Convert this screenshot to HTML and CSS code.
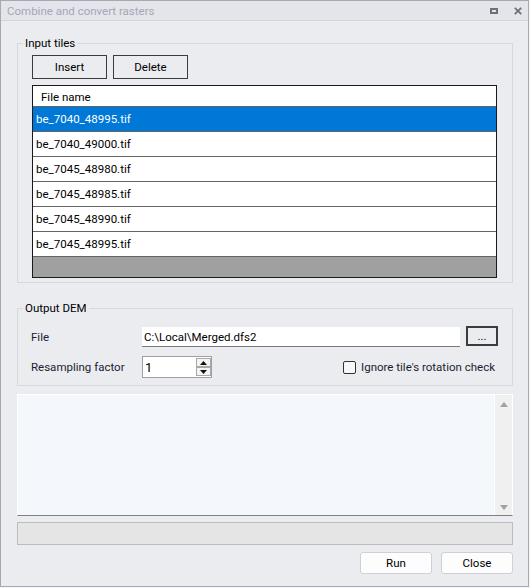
FILE: index.html
```html
<!DOCTYPE html>
<html lang="en">
<head>
    <meta charset="UTF-8">
    <title>Combine and convert rasters</title>
    <link rel="stylesheet" href="styles.css">
</head>
<body>
    <div class="window">
        <div class="titlebar">
            <span class="title">Combine and convert rasters</span>
            <span class="title-buttons">
                <span class="btn-max"></span>
                <svg class="btn-close" width="8" height="8" viewBox="0 0 8 8">
                    <path d="M0.8 0.8 L7.2 7.2 M7.2 0.8 L0.8 7.2" stroke="#6e6f7b" stroke-width="1.8" fill="none"/>
                </svg>
            </span>
        </div>

        <div class="content">
            <fieldset class="group">
                <legend>Input tiles</legend>
                <div class="tiles-body">
                    <div class="toolbar">
                        <button class="btn">Insert</button>
                        <button class="btn">Delete</button>
                    </div>
                    <div class="grid">
                        <div class="grid-head">File name</div>
                        <div class="grid-row selected">be_7040_48995.tif</div>
                        <div class="grid-row">be_7040_49000.tif</div>
                        <div class="grid-row">be_7045_48980.tif</div>
                        <div class="grid-row">be_7045_48985.tif</div>
                        <div class="grid-row">be_7045_48990.tif</div>
                        <div class="grid-row">be_7045_48995.tif</div>
                        <div class="grid-empty"></div>
                    </div>
                </div>
            </fieldset>

            <fieldset class="group output">
                <legend>Output DEM</legend>
                <div class="output-body">
                    <div class="field-row">
                        <span class="field-label">File</span>
                        <div class="textbox">C:\Local\Merged.dfs2</div>
                        <button class="btn browse">...</button>
                    </div>
                    <div class="field-row second">
                        <span class="field-label">Resampling factor</span>
                        <div class="spinbox">
                            <span class="spin-value">1</span>
                            <div class="spin-buttons">
                                <span class="spin-btn">
                                    <svg width="7" height="4" viewBox="0 0 7 4"><path d="M0 4 L3.5 0 L7 4 Z" fill="#111"/></svg>
                                </span>
                                <span class="spin-btn">
                                    <svg width="7" height="4" viewBox="0 0 7 4"><path d="M0 0 L3.5 4 L7 0 Z" fill="#111"/></svg>
                                </span>
                            </div>
                        </div>
                        <label class="check"><span class="checkbox"></span>Ignore tile's rotation check</label>
                    </div>
                </div>
            </fieldset>

            <div class="log">
                <div class="log-text"></div>
                <div class="scrollbar">
                    <svg width="8" height="5" viewBox="0 0 8 5"><path d="M0 5 L4 0 L8 5 Z" fill="#a2a2a6"/></svg>
                    <svg width="8" height="5" viewBox="0 0 8 5"><path d="M0 0 L4 5 L8 0 Z" fill="#a2a2a6"/></svg>
                </div>
            </div>

            <div class="progress"></div>

            <div class="actions">
                <button class="action">Run</button>
                <button class="action">Close</button>
            </div>
        </div>
    </div>
</body>
</html>
```

FILE: styles.css
```css
* {
    box-sizing: border-box;
}
body {
    margin: 0;
    background-color: #f6f6f8;
    font-family: Roboto, "Noto Sans", sans-serif;
    font-size: 11.5px;
    color: #000;
}
.window {
    width: 529px;
    height: 587px;
    border: 1px solid #a6a8b3;
    background-color: #ebecf0;
    display: flex;
    flex-direction: column;
}
.titlebar {
    height: 20px;
    border-bottom: 1px solid #d3d4da;
    background-color: #e4e5ea;
    display: flex;
    align-items: center;
    padding: 1px 6px 0 6px;
}
.title {
    flex: 1;
    color: #a3a7b8;
    font-size: 11.5px;
}
.title-buttons {
    display: flex;
    align-items: center;
    gap: 16px;
}
.btn-max {
    width: 8px;
    height: 6px;
    border: 2px solid #6e6f7b;
}
.btn-close {
    display: block;
}
.content {
    padding: 15px 15px 0 16px;
    display: flex;
    flex-direction: column;
}

/* group boxes */
.group {
    margin: 0;
    padding: 0;
    min-width: 0;
    border: 1px solid #d7d8dd;
}
.group legend {
    margin-left: 5px;
    padding: 0 2px;
    line-height: 14px;
}
.output {
    margin-top: 18px;
}
.tiles-body {
    padding: 5px 15px 4px 14px;
}
.toolbar {
    display: flex;
    gap: 6px;
}
.btn {
    width: 75px;
    height: 24px;
    padding: 0;
    border: 1px solid #3c3c3c;
    background-color: #ebecf0;
    font: inherit;
    color: #000;
}

/* file list */
.grid {
    margin-top: 6px;
    border: 1px solid #1a1a1a;
    background-color: #a0a0a0;
}
.grid-head {
    height: 21px;
    line-height: 22px;
    padding-left: 8px;
    border-bottom: 1px solid #646464;
    background-color: #fff;
}
.grid-row {
    height: 25px;
    line-height: 25px;
    padding-left: 3px;
    border-bottom: 1px solid #646464;
    background-color: #fff;
}
.grid-row.selected {
    background-color: #0078d7;
    color: #fff;
}
.grid-empty {
    height: 20px;
}

/* output settings */
.output-body {
    padding: 11px 14px 7px 13px;
}
.field-row {
    display: flex;
    align-items: flex-start;
}
.field-row.second {
    margin-top: 8px;
    align-items: center;
}
.field-label {
    width: 111px;
    color: #1c1c30;
    line-height: 22px;
}
.textbox {
    width: 318px;
    height: 20px;
    margin-top: 1px;
    padding-left: 2px;
    line-height: 20px;
    background-color: #fff;
    border-bottom: 1px solid #7a7a7a;
}
.btn.browse {
    width: 32px;
    height: 20px;
    margin-left: 6px;
    border-width: 2px;
    line-height: 14px;
}
.spinbox {
    width: 70px;
    height: 22px;
    border: 1px solid #a0a0a0;
    background-color: #fff;
    display: flex;
    align-items: center;
    justify-content: space-between;
    padding: 0 0 0 2px;
}
.spin-value {
    font-size: 13px;
}
.spin-buttons {
    display: flex;
    flex-direction: column;
}
.spin-btn {
    width: 15px;
    height: 9px;
    border: 1px solid #a8a8a8;
    background-color: #f4f4f4;
    display: flex;
    align-items: center;
    justify-content: center;
}
.check {
    margin-left: auto;
    margin-right: 3px;
    display: flex;
    align-items: center;
    gap: 5px;
    color: #1c1c30;
}
.checkbox {
    width: 13px;
    height: 13px;
    border: 1px solid #333;
    border-radius: 2px;
    background-color: #f7f7f7;
}

/* log output */
.log {
    margin-top: 8px;
    height: 122px;
    display: flex;
    border: 1px solid #fff;
    border-bottom-color: #7f7f7f;
    background-color: #f4f7fb;
}
.log-text {
    flex: 1;
}
.scrollbar {
    width: 18px;
    border-left: 1px solid #fff;
    background-color: #f0f0f1;
    display: flex;
    flex-direction: column;
    justify-content: space-between;
    align-items: center;
    padding: 7px 0 5px;
}
.progress {
    margin-top: 6px;
    height: 23px;
    border: 1px solid #bcbcbc;
    background-color: #e5e5e5;
}
.actions {
    margin-top: 7px;
    display: flex;
    justify-content: flex-end;
    gap: 9px;
}
.action {
    width: 72px;
    height: 22px;
    padding: 0;
    border: 1px solid #cfd0d6;
    border-radius: 3px;
    background-color: #fdfdfd;
    font: inherit;
    color: #000;
}
```
